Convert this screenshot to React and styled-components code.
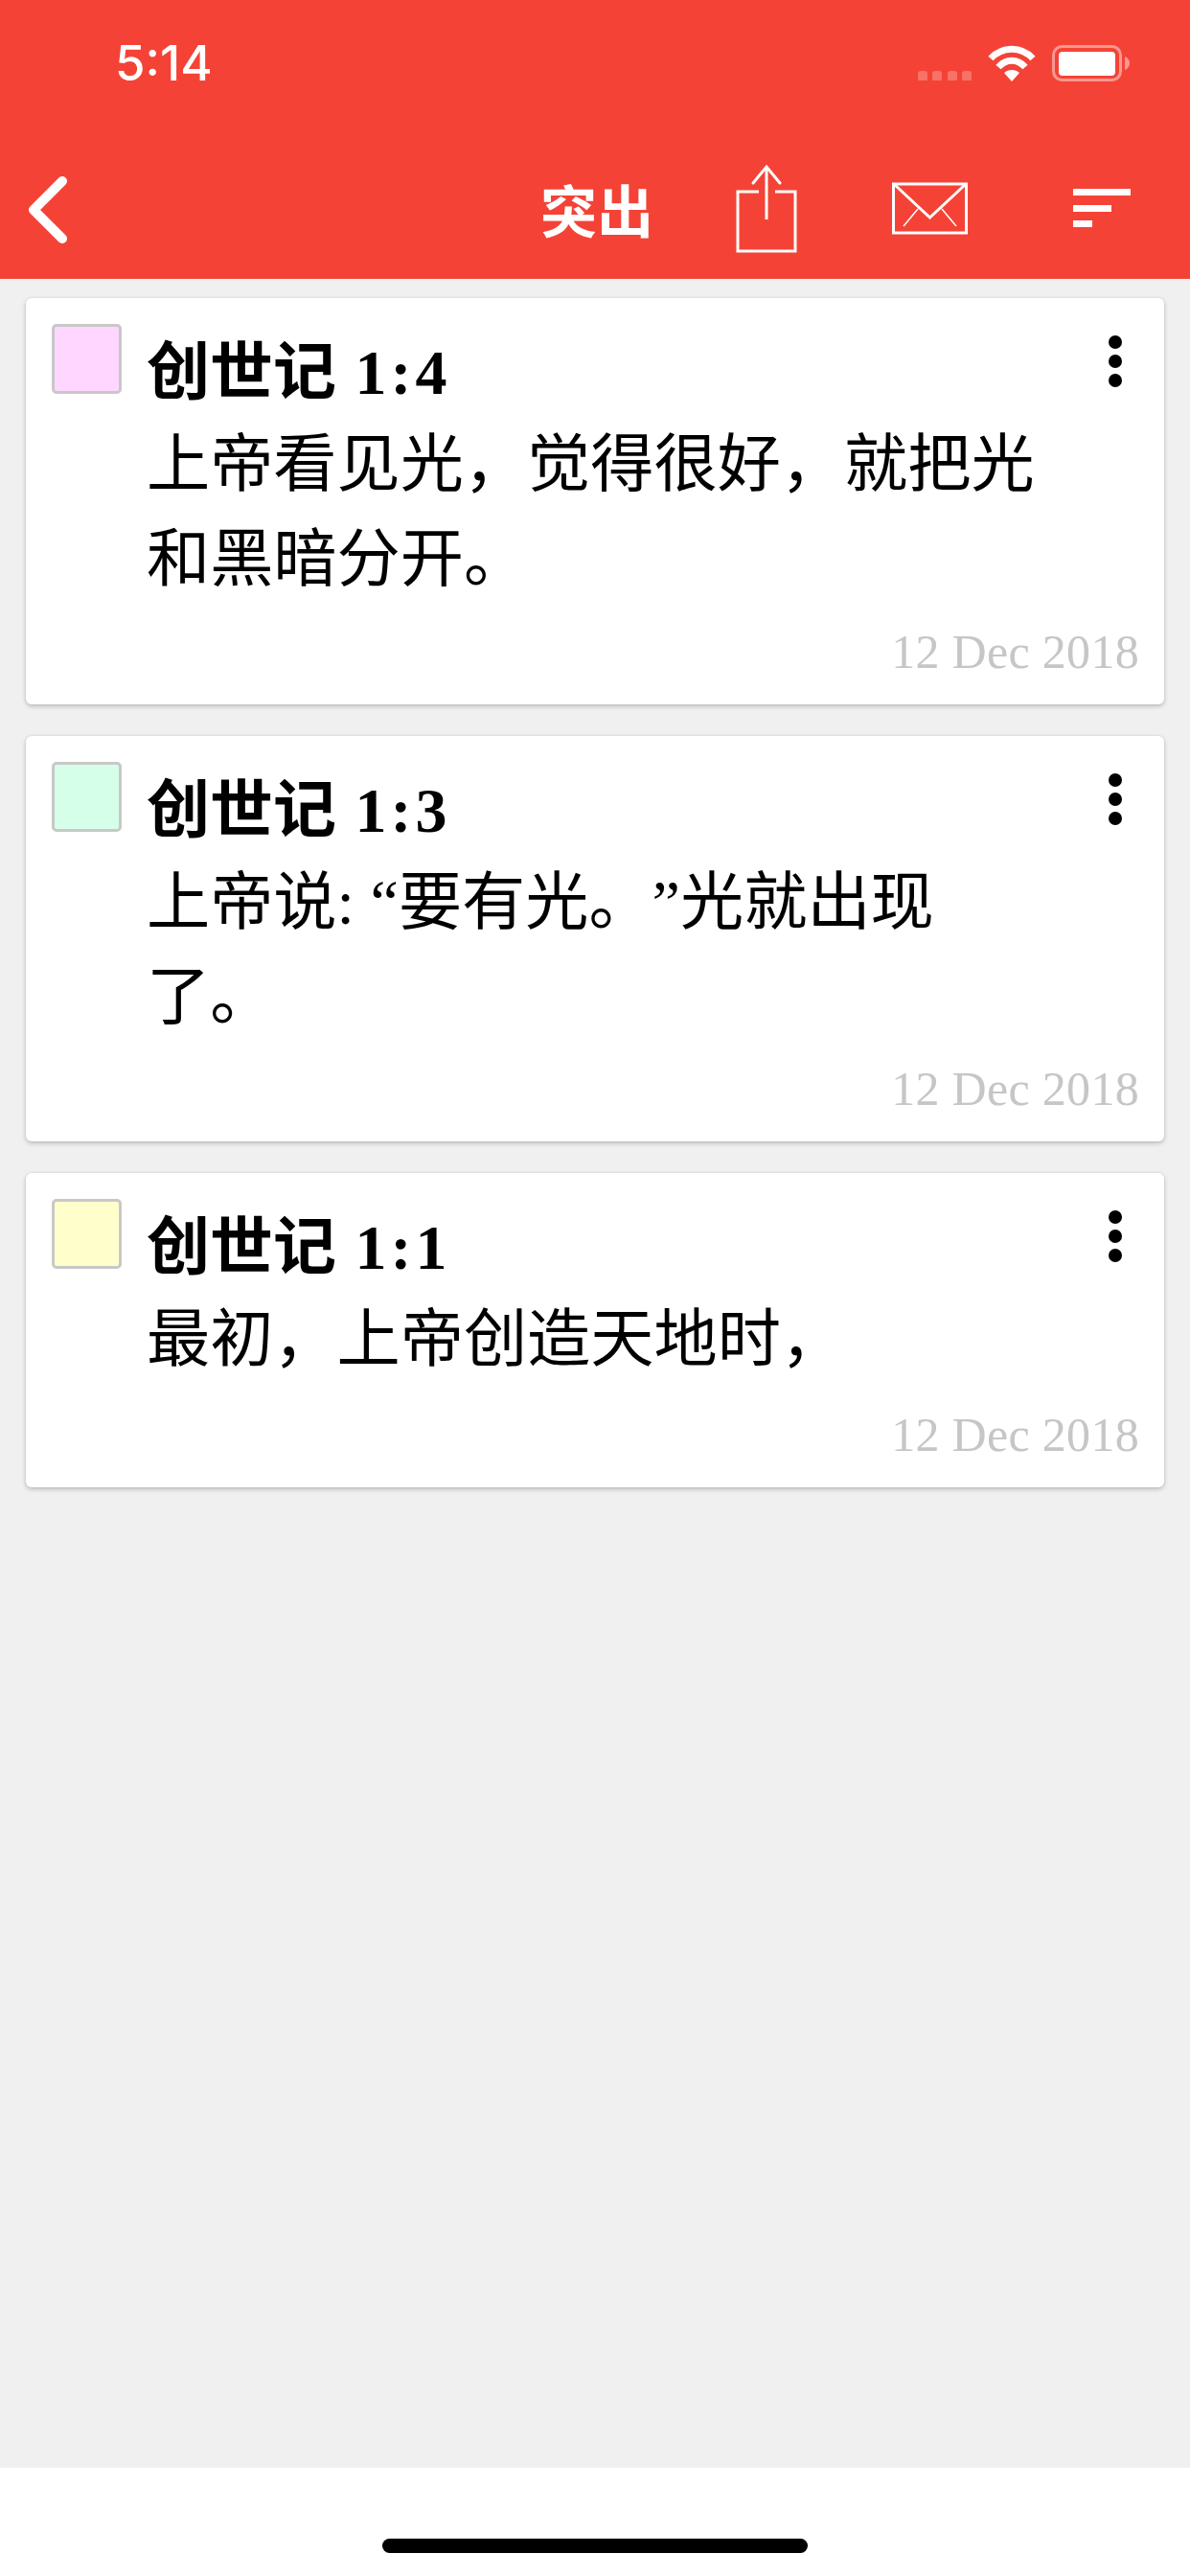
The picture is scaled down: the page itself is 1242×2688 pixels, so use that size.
import React from "react";
import styled, { createGlobalStyle } from "styled-components";

const Global = createGlobalStyle`
  html, body { margin: 0; padding: 0; background: #f0f0f0; }
  #root { width: 1242px; height: 2688px; }
  * { box-sizing: border-box; }
`;

const Screen = styled.div`
  width: 1242px;
  height: 2688px;
  display: flex;
  flex-direction: column;
  background: #f0f0f0;
  overflow: hidden;
  font-family: "Liberation Serif", "Noto Sans CJK SC", serif;
`;

const Header = styled.header`
  height: 291px;
  flex: none;
  background: #f44336;
  color: #fff;
  display: flex;
  flex-direction: column;
`;

const StatusBar = styled.div`
  height: 130px;
  flex: none;
  display: flex;
  align-items: flex-start;
  justify-content: space-between;
  padding: 40px 63px 0 120px;
`;

const Time = styled.div`
  font: 500 51px/52px Inter, "Liberation Sans", sans-serif;
`;

const StatusIcons = styled.div`
  display: flex;
  align-items: flex-start;
  gap: 17px;
  margin-top: 7px;
`;

const CellDots = styled.svg`
  margin-top: 27px;
`;

const NavBar = styled.div`
  flex: 1;
  display: flex;
  align-items: flex-start;
`;

const Title = styled.div`
  margin: 54px 0 0 492px;
  width: 120px;
  font: 700 59px/68px "Noto Sans CJK SC", sans-serif;
  white-space: nowrap;
`;

const NavIcon = styled.svg`
  flex: none;
  margin-left: ${(p) => p.$ml}px;
  margin-top: ${(p) => p.$mt}px;
`;

const List = styled.main`
  flex: 1;
  display: flex;
  flex-direction: column;
  gap: 33px;
  padding: 20px 27px 0 27px;
`;

const Card = styled.article`
  position: relative;
  height: ${(p) => p.$h}px;
  background: #fff;
  border-radius: 6px;
  box-shadow: 0 2px 5px rgba(0, 0, 0, 0.22), 0 0 3px rgba(0, 0, 0, 0.08);
  display: flex;
  padding: 27px 0 0 27px;
`;

const Swatch = styled.div`
  width: 73px;
  height: 73px;
  flex: none;
  background: ${(p) => p.$color};
  border: 3px solid #c8c8c8;
  border-radius: 5px;
`;

const Content = styled.div`
  margin-left: 26px;
  width: 930px;
`;

const Heading = styled.h2`
  margin: 15px 0 0;
  font: 700 66px/72px "Liberation Serif", "Noto Sans CJK SC", serif;
  color: #000;
`;

const RefNumber = styled.span`
  margin-left: 3px;
  letter-spacing: 4px;
`;

const Verse = styled.p`
  margin: 10px 0 0;
  width: 930px;
  font: 400 66.2px/99px "Liberation Serif", "Noto Sans CJK SC", serif;
  text-spacing-trim: space-all;
  color: #000;
  white-space: pre-line;
`;

const DateText = styled.div`
  position: absolute;
  right: 26px;
  bottom: 27px;
  font: 400 50px/56px "Liberation Serif", serif;
  letter-spacing: 0.3px;
  color: #c6c6c6;
`;

const More = styled.div`
  position: absolute;
  right: 44px;
  top: 39px;
  display: flex;
  flex-direction: column;
  gap: 6px;
`;

const Dot = styled.span`
  width: 14px;
  height: 14px;
  border-radius: 50%;
  background: #000;
`;

const BottomBar = styled.footer`
  height: 113px;
  flex: none;
  background: #fff;
  display: flex;
  justify-content: center;
  padding-top: 74px;
`;

const HomeIndicator = styled.div`
  width: 444px;
  height: 15px;
  border-radius: 8px;
  background: #000;
`;

const cards = [
  { h: 424, color: "#ffd6ff", book: "创世记 ", num: "1:4", text: "上帝看见光，觉得很好，就把光\n和黑暗分开。" },
  { h: 423, color: "#d6ffe9", book: "创世记 ", num: "1:3", text: "上帝说: “要有光。”光就出现\n了。" },
  { h: 328, color: "#ffffcc", book: "创世记 ", num: "1:1", text: "最初，上帝创造天地时，" },
];

export default function App() {
  return (
    <Screen>
      <Global />
      <Header>
        <StatusBar>
          <Time>5:14</Time>
          <StatusIcons>
            <CellDots width="56" height="10" viewBox="0 0 56 10">
              <g fill="#fff" fillOpacity="0.25">
                <rect x="0" y="0" width="10" height="11" rx="3" />
                <rect x="15" y="0" width="10" height="11" rx="3" />
                <rect x="31" y="0" width="10" height="11" rx="3" />
                <rect x="46" y="0" width="10" height="11" rx="3" />
              </g>
            </CellDots>
            <svg width="50" height="38" viewBox="0 0 50 38">
              <g fill="none" stroke="#fff" strokeWidth="7">
                <path d="M3 14 C15 1 35 1 47 14" />
                <path d="M11 23 C19 14 31 14 39 23" />
              </g>
              <path d="M17 29 C21 25 29 25 33 29 L25 38 Z" fill="#fff" />
            </svg>
            <svg width="81" height="38" viewBox="0 0 81 38">
              <rect x="1.5" y="1.5" width="70" height="35" rx="9" fill="none" stroke="#fff" strokeOpacity="0.45" strokeWidth="3" />
              <rect x="7" y="7" width="59" height="25" rx="4" fill="#fff" />
              <path d="M76 12 C79 13 81 16 81 19 C81 22 79 25 76 26 Z" fill="#fff" fillOpacity="0.45" />
            </svg>
          </StatusIcons>
        </StatusBar>
        <NavBar>
          <NavIcon $ml={28} $mt={52} width="44" height="74" viewBox="0 0 44 74">
            <path d="M37 7 L7 37 L37 67" fill="none" stroke="#fff" strokeWidth="10" strokeLinecap="round" strokeLinejoin="round" />
          </NavIcon>
          <Title>突出</Title>
          <NavIcon $ml={84} $mt={41} width="64" height="94" viewBox="0 0 64 94" fill="none" stroke="#fff" strokeWidth="3">
            <path d="M24 29 H2 V91 H62 V29 H41" />
            <path d="M32 3 V58" />
            <path d="M18 20 L32 3 L46 20" strokeLinecap="round" />
          </NavIcon>
          <NavIcon $ml={99} $mt={60} width="79" height="55" viewBox="0 0 79 55" fill="none" stroke="#fff">
            <rect x="1.5" y="2" width="76" height="51" strokeWidth="3" />
            <path d="M3 3 L39.5 37 L76 3" strokeWidth="3" />
            <path d="M27 28 L12 46 M52 28 L67 46" strokeWidth="1.5" />
          </NavIcon>
          <NavIcon $ml={110} $mt={67} width="60" height="40" viewBox="0 0 60 40" fill="#fff">
            <rect x="0" y="0" width="60" height="7" />
            <rect x="0" y="17" width="40" height="7" />
            <rect x="0" y="33" width="20" height="7" />
          </NavIcon>
        </NavBar>
      </Header>
      <List>
        {cards.map((c) => (
          <Card key={c.num} $h={c.h}>
            <Swatch $color={c.color} />
            <Content>
              <Heading>{c.book}<RefNumber>{c.num}</RefNumber></Heading>
              <Verse>{c.text}</Verse>
            </Content>
            <More><Dot /><Dot /><Dot /></More>
            <DateText>12 Dec 2018</DateText>
          </Card>
        ))}
      </List>
      <BottomBar><HomeIndicator /></BottomBar>
    </Screen>
  );
}
